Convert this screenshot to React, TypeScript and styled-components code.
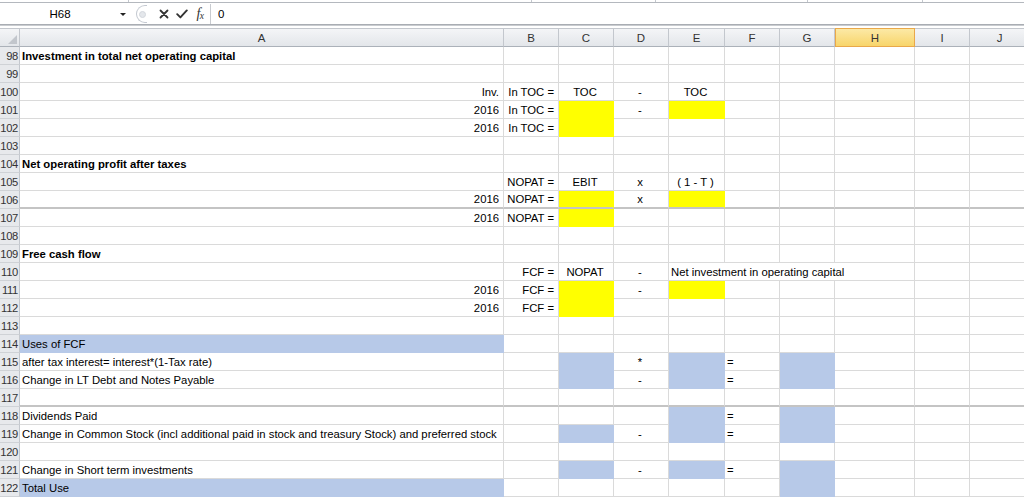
import React from 'react';
import styled, { createGlobalStyle } from 'styled-components';

type Align = 'left' | 'center' | 'right';
type Fill = 'yellow' | 'blue';

interface CellSpec {
    col: number
    text?: string
    align?: Align
    fill?: Fill
    bold?: boolean
    span?: number
}

interface RowSpec {
    n: number
    cells: CellSpec[]
    rule?: boolean
}

const GRID = '#dadada';
const FILLS: Record<Fill, string> = {
    yellow: '#ffff00',
    blue: '#b7c9e8',
};

const LETTERS = ['A', 'B', 'C', 'D', 'E', 'F', 'G', 'H', 'I', 'J'];
const WIDTHS = [484, 55, 55, 55, 56, 55, 55, 80, 55, 60];

const GlobalStyle = createGlobalStyle`
  html, body {
    margin: 0;
    padding: 0;
    background: #ffffff;
    overflow: hidden;
  }
  body {
    font-family: 'Liberation Sans', Arial, sans-serif;
    color: #000;
  }
`

const Window = styled.div`
    width: 1024px;
    height: 497px;
    overflow: hidden;
    background: #ffffff;
`

const RibbonEdge = styled.div`
    display: flex;
    height: 2px;
    border-bottom: 1px solid #b4b8be;
    margin-bottom: 1px;
`

const RibbonGroup = styled.div<{ $w: number }>`
    width: ${p => p.$w}px;
    border-right: 1px solid #c4c8ce;
    flex-shrink: 0;
`

const FormulaBar = styled.div`
    display: flex;
    align-items: stretch;
    height: 20px;
    font-size: 11.5px;
`

const NameBox = styled.div`
    width: 133px;
    display: flex;
    align-items: center;
    flex-shrink: 0;
`

const NameText = styled.span`
    width: 120px;
    text-align: center;
`

const DropArrow = styled.span`
    width: 0;
    height: 0;
    border-left: 3px solid transparent;
    border-right: 3px solid transparent;
    border-top: 3px solid #222;
    margin-top: 1px;
`

const FxControls = styled.div`
    width: 77px;
    display: flex;
    align-items: center;
    flex-shrink: 0;
`

const PillEnd = styled.div`
    width: 11px;
    height: 18px;
    border: 1px solid #c3c8d0;
    border-right: none;
    border-radius: 10px 0 0 10px;
    display: flex;
    align-items: center;
    justify-content: flex-end;
    box-sizing: border-box;
    margin-left: 3px;
`

const PillDot = styled.span`
    width: 5px;
    height: 5px;
    border-radius: 50%;
    background: #e4e7eb;
    border: 1px solid #d3d7dd;
    margin-right: 1px;
`

const IconSlot = styled.span<{ $gap?: number }>`
    width: 18px;
    margin-left: ${p => p.$gap ?? 0}px;
    display: flex;
    align-items: center;
    justify-content: center;
`

const FxLabel = styled.span`
    font-family: 'Liberation Serif', 'Times New Roman', serif;
    font-style: italic;
    font-size: 14px;
    color: #333;
    letter-spacing: -0.5px;

    sub {
        font-size: 9.5px;
        vertical-align: -1px;
    }
`

const FormulaInput = styled.div`
    flex: 1;
    border-left: 1px solid #c8cbd0;
    display: flex;
    align-items: center;
    padding-left: 7px;
`

const BarDivider = styled.div`
    height: 0;
    border-top: 1px solid #a9adb3;
    border-bottom: 1px solid #c9ccd0;
    margin-bottom: 2px;
`

const Sheet = styled.div`
    display: grid;
    grid-template-columns: 20px ${WIDTHS.map(w => `${w}px`).join(' ')};
    grid-auto-rows: 18px;
    grid-template-rows: 19px;
    font-size: 11.3px;
`

const Corner = styled.div`
    background: linear-gradient(#f4f5f7, #e3e6ea);
    border-top: 1px solid #c3c7cd;
    border-right: 1px solid #c3c7cd;
    border-bottom: 1px solid #abb1b9;
    box-sizing: border-box;
    display: flex;
    align-items: flex-end;
    justify-content: flex-end;
    padding: 0 2px 2px 0;
`

const CornerTriangle = styled.span`
    width: 0;
    height: 0;
    border-left: 9px solid transparent;
    border-bottom: 9px solid #c2c6cc;
`

const ColHead = styled.div<{ $active?: boolean }>`
    box-sizing: border-box;
    display: flex;
    align-items: center;
    justify-content: center;
    color: #333;
    font-size: 11.5px;
    padding-top: 1px;
    background: ${p => p.$active
        ? 'linear-gradient(#fce9a6, #f8d56a)'
        : 'linear-gradient(#f4f5f7, #e3e6ea)'};
    border-top: 1px solid ${p => (p.$active ? '#e9a84a' : '#c3c7cd')};
    border-right: 1px solid ${p => (p.$active ? '#e9a84a' : '#c3c7cd')};
    border-bottom: 1px solid ${p => (p.$active ? '#e9a84a' : '#abb1b9')};
    border-left: ${p => (p.$active ? '1px solid #e9a84a' : 'none')};
`

const RowHead = styled.div`
    box-sizing: border-box;
    background: #e7e9ec;
    border-right: 1px solid #c3c7cd;
    border-bottom: 1px solid #cfd2d6;
    color: #333;
    font-size: 11.2px;
    display: flex;
    align-items: flex-end;
    justify-content: flex-end;
    padding: 0 1px 1px 0;
    line-height: 13px;
    letter-spacing: -0.3px;
    overflow: hidden;
`

const Cell = styled.div<{ $align: Align; $fill?: Fill; $bold?: boolean; $rule?: boolean; $span: number }>`
    box-sizing: border-box;
    grid-column: span ${p => p.$span};
    display: flex;
    align-items: flex-end;
    justify-content: ${p => (p.$align === 'left' ? 'flex-start' : p.$align === 'right' ? 'flex-end' : 'center')};
    padding: 0 ${p => (p.$align === 'right' ? 4 : 2)}px 1px ${p => (p.$align === 'left' ? 2 : 0)}px;
    line-height: 13px;
    white-space: nowrap;
    font-weight: ${p => (p.$bold ? 700 : 400)};
    background: ${p => (p.$fill ? FILLS[p.$fill] : 'transparent')};
    border-right: 1px solid ${p => (p.$fill ? FILLS[p.$fill] : GRID)};
    border-bottom: ${p => (p.$rule ? '2px solid #c4c4c4' : `1px solid ${p.$fill ? FILLS[p.$fill] : GRID}`)};
`

const sheet: RowSpec[] = [
    { n: 98, cells: [{ col: 0, text: 'Investment in total net operating capital', bold: true }] },
    { n: 99, cells: [] },
    {
        n: 100, cells: [
            { col: 0, text: 'Inv.', align: 'right' },
            { col: 1, text: 'In TOC =', align: 'right' },
            { col: 2, text: 'TOC' },
            { col: 3, text: '-' },
            { col: 4, text: 'TOC' },
        ]
    },
    {
        n: 101, cells: [
            { col: 0, text: '2016', align: 'right' },
            { col: 1, text: 'In TOC =', align: 'right' },
            { col: 2, fill: 'yellow' },
            { col: 3, text: '-' },
            { col: 4, fill: 'yellow' },
        ]
    },
    {
        n: 102, cells: [
            { col: 0, text: '2016', align: 'right' },
            { col: 1, text: 'In TOC =', align: 'right' },
            { col: 2, fill: 'yellow' },
        ]
    },
    { n: 103, cells: [] },
    { n: 104, cells: [{ col: 0, text: 'Net operating profit after taxes', bold: true }] },
    {
        n: 105, cells: [
            { col: 1, text: 'NOPAT =', align: 'right' },
            { col: 2, text: 'EBIT' },
            { col: 3, text: 'x' },
            { col: 4, text: '( 1 - T )' },
        ]
    },
    {
        n: 106, rule: true, cells: [
            { col: 0, text: '2016', align: 'right' },
            { col: 1, text: 'NOPAT =', align: 'right' },
            { col: 2, fill: 'yellow' },
            { col: 3, text: 'x' },
            { col: 4, fill: 'yellow' },
        ]
    },
    {
        n: 107, cells: [
            { col: 0, text: '2016', align: 'right' },
            { col: 1, text: 'NOPAT =', align: 'right' },
            { col: 2, fill: 'yellow' },
        ]
    },
    { n: 108, cells: [] },
    { n: 109, cells: [{ col: 0, text: 'Free cash flow', bold: true }] },
    {
        n: 110, cells: [
            { col: 1, text: 'FCF =', align: 'right' },
            { col: 2, text: 'NOPAT' },
            { col: 3, text: '-' },
            { col: 4, text: 'Net investment in operating capital', align: 'left', span: 4 },
        ]
    },
    {
        n: 111, cells: [
            { col: 0, text: '2016', align: 'right' },
            { col: 1, text: 'FCF =', align: 'right' },
            { col: 2, fill: 'yellow' },
            { col: 3, text: '-' },
            { col: 4, fill: 'yellow' },
        ]
    },
    {
        n: 112, cells: [
            { col: 0, text: '2016', align: 'right' },
            { col: 1, text: 'FCF =', align: 'right' },
            { col: 2, fill: 'yellow' },
        ]
    },
    { n: 113, cells: [] },
    { n: 114, cells: [{ col: 0, text: 'Uses of FCF', fill: 'blue' }] },
    {
        n: 115, cells: [
            { col: 0, text: 'after tax interest= interest*(1-Tax rate)' },
            { col: 2, fill: 'blue' },
            { col: 3, text: '*' },
            { col: 4, fill: 'blue' },
            { col: 5, text: '=', align: 'left' },
            { col: 6, fill: 'blue' },
        ]
    },
    {
        n: 116, cells: [
            { col: 0, text: 'Change in LT Debt and Notes Payable' },
            { col: 2, fill: 'blue' },
            { col: 3, text: '-' },
            { col: 4, fill: 'blue' },
            { col: 5, text: '=', align: 'left' },
            { col: 6, fill: 'blue' },
        ]
    },
    { n: 117, rule: true, cells: [] },
    {
        n: 118, cells: [
            { col: 0, text: 'Dividends Paid' },
            { col: 4, fill: 'blue' },
            { col: 5, text: '=', align: 'left' },
            { col: 6, fill: 'blue' },
        ]
    },
    {
        n: 119, cells: [
            { col: 0, text: 'Change in Common Stock (incl additional paid in stock and treasury Stock) and preferred stock' },
            { col: 2, fill: 'blue' },
            { col: 3, text: '-' },
            { col: 4, fill: 'blue' },
            { col: 5, text: '=', align: 'left' },
            { col: 6, fill: 'blue' },
        ]
    },
    { n: 120, cells: [] },
    {
        n: 121, cells: [
            { col: 0, text: 'Change in Short term investments' },
            { col: 2, fill: 'blue' },
            { col: 3, text: '-' },
            { col: 4, fill: 'blue' },
            { col: 5, text: '=', align: 'left' },
            { col: 6, fill: 'blue' },
        ]
    },
    {
        n: 122, cells: [
            { col: 0, text: 'Total Use', fill: 'blue' },
            { col: 6, fill: 'blue' },
        ]
    },
];

const CancelIcon = () => (
    <svg width="10" height="10" viewBox="0 0 10 10">
        <path d="M1.5 1.5 L8.5 8.5 M8.5 1.5 L1.5 8.5" stroke="#333" strokeWidth="1.8" strokeLinecap="round" />
    </svg>
);

const EnterIcon = () => (
    <svg width="12" height="10" viewBox="0 0 12 10">
        <path d="M1.2 5.2 L4.4 8.4 L10.8 1.4" stroke="#333" strokeWidth="1.9" fill="none" strokeLinecap="round" strokeLinejoin="round" />
    </svg>
);

function renderRow(row: RowSpec) {
    const out: React.ReactNode[] = [<RowHead key={`h${row.n}`}>{row.n}</RowHead>];
    let col = 0;
    while (col < LETTERS.length) {
        const spec = row.cells.find(c => c.col === col);
        const span = spec?.span ?? 1;
        out.push(
            <Cell
                key={`${row.n}-${col}`}
                $align={spec?.align ?? (col === 0 ? 'left' : 'center')}
                $fill={spec?.fill}
                $bold={spec?.bold}
                $rule={row.rule}
                $span={span}
            >
                {spec?.text}
            </Cell>
        );
        col += span;
    }
    return out;
}

const App: React.FC = () => {
    return (
        <Window>
            <GlobalStyle />
            <RibbonEdge>
                <RibbonGroup $w={128} />
                <RibbonGroup $w={402} />
                <RibbonGroup $w={123} />
                <RibbonGroup $w={151} />
                <RibbonGroup $w={114} />
            </RibbonEdge>
            <FormulaBar>
                <NameBox>
                    <NameText>H68</NameText>
                    <DropArrow />
                </NameBox>
                <FxControls>
                    <PillEnd><PillDot /></PillEnd>
                    <IconSlot $gap={8}><CancelIcon /></IconSlot>
                    <IconSlot><EnterIcon /></IconSlot>
                    <IconSlot><FxLabel>f<sub>x</sub></FxLabel></IconSlot>
                </FxControls>
                <FormulaInput>0</FormulaInput>
            </FormulaBar>
            <BarDivider />
            <Sheet>
                <Corner><CornerTriangle /></Corner>
                {LETTERS.map(l => (
                    <ColHead key={l} $active={l === 'H'}>{l}</ColHead>
                ))}
                {sheet.map(renderRow)}
            </Sheet>
        </Window>
    );
}

export default App;
